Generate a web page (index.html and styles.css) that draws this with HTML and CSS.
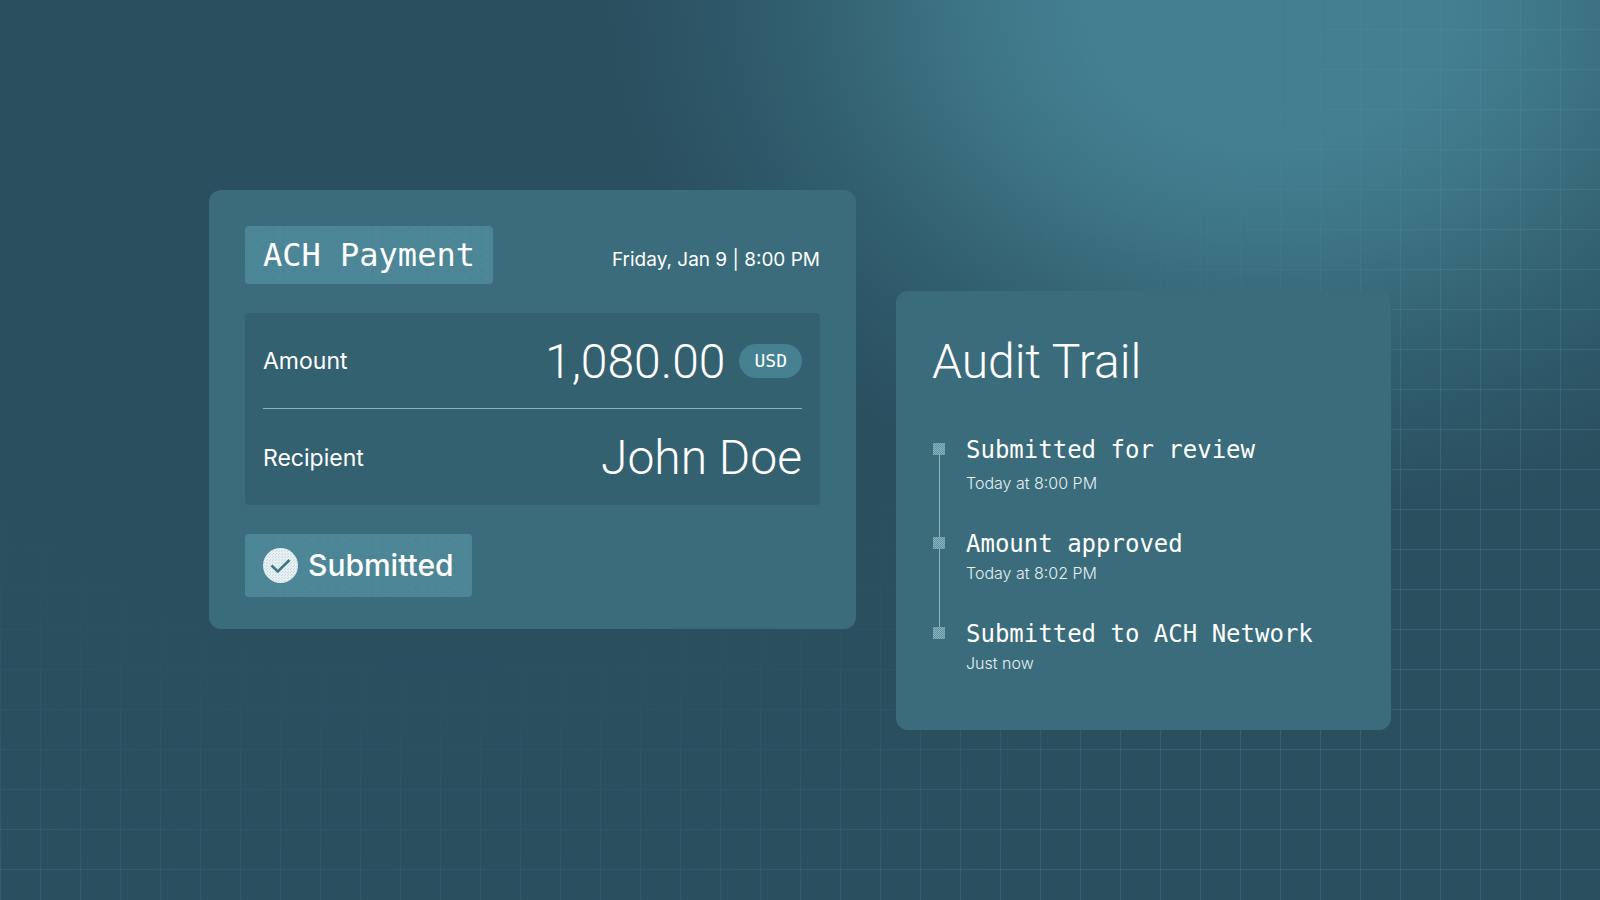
FILE: index.html
```html
<!DOCTYPE html>
<html lang="en">
<head>
<meta charset="utf-8">
<meta name="viewport" content="width=device-width, initial-scale=1">
<title>ACH Payment</title>
<link rel="stylesheet" href="styles.css">
</head>
<body>
<main class="stage">
  <section class="card payment">
    <header class="payment-head">
      <h1 class="tag">ACH Payment</h1>
      <time class="payment-date">Friday, Jan 9 | 8:00 PM</time>
    </header>
    <dl class="details">
      <div class="detail">
        <dt>Amount</dt>
        <dd>1,080.00 <span class="currency">USD</span></dd>
      </div>
      <div class="detail">
        <dt>Recipient</dt>
        <dd>John Doe</dd>
      </div>
    </dl>
    <p class="tag status">
      <svg class="status-icon" viewBox="0 0 35 35" aria-hidden="true">
        <defs>
          <pattern id="grain" width="3" height="3" patternUnits="userSpaceOnUse">
            <rect width="3" height="3" fill="#e6eff1"/>
            <path d="M0 0h1v1H0zM1 2h1v1H1z" fill="#c9dbe0"/>
          </pattern>
        </defs>
        <circle cx="17.500" cy="17.500" r="17.500" fill="url(#grain)"/>
        <path d="M8.500 17.500l6.300 6L26.500 12" fill="none" stroke="#3f7686" stroke-width="2.600"/>
      </svg>
      Submitted
    </p>
  </section>

  <section class="card audit">
    <h2>Audit Trail</h2>
    <ol class="trail">
      <li>
        <h3>Submitted for review</h3>
        <p>Today at 8:00 PM</p>
      </li>
      <li>
        <h3>Amount approved</h3>
        <p>Today at 8:02 PM</p>
      </li>
      <li>
        <h3>Submitted to ACH Network</h3>
        <p>Just now</p>
      </li>
    </ol>
  </section>
</main>
</body>
</html>
```
FILE: styles.css
```css
* {
  box-sizing: border-box;
  margin: 0;
  padding: 0;
}

:root {
  --base: #2a4f5f;
  --card: #3a6c7c;
  --panel: #346170;
  --tag: #4d8797;
  --mono: "DejaVu Sans Mono", "Liberation Mono", monospace;
  --display: Roboto, "Liberation Sans", sans-serif;
}

body {
  position: relative;
  min-height: 100vh;
  background:
    radial-gradient(ellipse 660px 520px at 1270px 0, #437f91 0, #437f91 28%, #3d7586 46%, #386a7a 58%, #315e6e 73%, #2d5667 86%, var(--base) 100%)
    var(--base);
  color: #fff;
  font-family: Inter, "Liberation Sans", sans-serif;
}

/* Grid lines that fade in towards the lower and right edges */
body::before {
  content: "";
  position: absolute;
  inset: 0;
  background:
    linear-gradient(rgb(90 150 166 / 0.26) 1px, transparent 1px) 0 29px / 40px 40px,
    linear-gradient(90deg, rgb(70 150 166 / 0.28) 1px, transparent 1px) 0 0 / 40px 40px;
  mask-image: radial-gradient(circle at 440px 0, transparent 640px, rgb(0 0 0 / 0.4) 840px, #000 1040px);
}

.stage {
  position: relative;
  display: grid;
  grid-template-columns: 647fr 495fr;
  align-items: start;
  gap: 40px;
  max-width: 1182px;
  margin: 0 auto;
  padding: 190px 0 40px;
}

.card {
  background: var(--card);
  border-radius: 12px;
}

.payment {
  display: flex;
  flex-direction: column;
  align-items: flex-start;
  gap: 29px;
  padding: 36px 36px 32px;
}

.payment-head {
  display: flex;
  justify-content: space-between;
  align-items: center;
  width: 100%;
}

.tag {
  padding: 10px 18px;
  border-radius: 4px;
  background:
    radial-gradient(circle at 2px 2px, #4a8393 1px, transparent 1px) 0 0 / 9px 7px,
    radial-gradient(circle at 6px 5px, #4a8393 1px, transparent 1px) 0 0 / 11px 8px,
    var(--tag);
  font-family: var(--mono);
  font-size: 32px;
  font-weight: 400;
  line-height: 38px;
}

.payment-date {
  padding-top: 10px;
  font-size: 19px;
  line-height: 24px;
}

.details {
  width: 100%;
  padding: 0 18px;
  border-radius: 4px;
  background: var(--panel);
}

.detail {
  display: flex;
  justify-content: space-between;
  align-items: center;
  height: 95px;
  padding-top: 1px;
}

.detail + .detail {
  height: 97px;
  border-top: 1px solid #92b0b7;
}

.detail dt {
  font-size: 23px;
}

.detail dd {
  display: flex;
  align-items: center;
  gap: 14px;
  font-family: var(--display);
  font-size: 48px;
  font-weight: 300;
}

.currency {
  padding: 0 15px;
  border-radius: 17px;
  background: #468191;
  font-family: var(--mono);
  font-size: 18px;
  font-weight: 400;
  line-height: 34px;
}

.status {
  display: flex;
  align-items: center;
  gap: 10px;
  padding: 14px 18px;
  font-family: inherit;
  font-size: 30px;
  font-weight: 500;
  line-height: 35px;
}

.status-icon {
  width: 35px;
  height: 35px;
}

.audit {
  margin-top: 101px;
  padding: 41px 36px 53px;
}

.audit h2 {
  font-family: var(--display);
  font-size: 48px;
  font-weight: 300;
  line-height: 60px;
}

.trail {
  display: flex;
  flex-direction: column;
  gap: 32px;
  margin-top: 43px;
  list-style: none;
}

.trail li {
  position: relative;
  padding-left: 34px;
}

.trail h3 {
  font-family: var(--mono);
  font-size: 24px;
  font-weight: 400;
  line-height: 30px;
}

.trail p {
  color: #e6eff1;
  font-size: 16px;
  font-weight: 300;
  line-height: 28px;
}

.trail li:first-child p {
  padding-top: 4px;
}

.trail li::before {
  content: "";
  position: absolute;
  top: 8px;
  left: 1px;
  width: 12px;
  height: 12px;
  background: repeating-conic-gradient(#8cb0ba 0 25%, #5f94a2 0 50%) 0 0 / 2px 2px;
}

.trail li:not(:last-child)::after {
  content: "";
  position: absolute;
  top: 20px;
  bottom: -40px;
  left: 7px;
  width: 1px;
  background: #92b5be;
}
```
